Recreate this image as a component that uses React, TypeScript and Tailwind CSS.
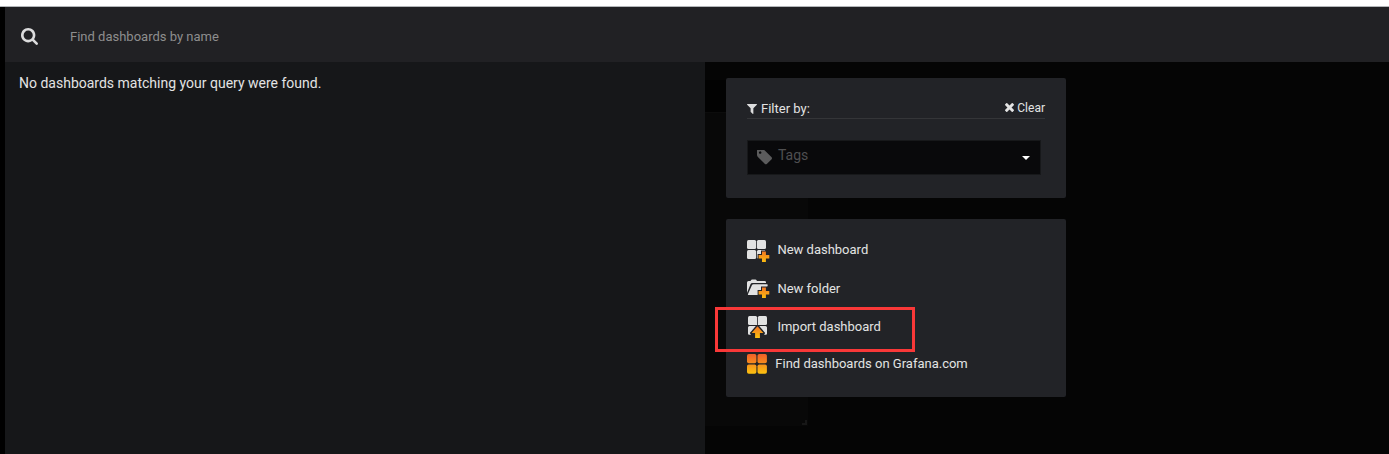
import type { ReactNode } from "react";

function Glyph({ d, viewBox, className }: { d: string; viewBox: string; className: string }) {
  return (
    <svg viewBox={viewBox} preserveAspectRatio="none" className={`shrink-0 ${className}`} fill="currentColor" aria-hidden="true">
      <path d={d} />
    </svg>
  );
}

const SEARCH =
  "M1216 832q0-185-131.5-316.5t-316.5-131.5-316.5 131.5-131.5 316.5 131.5 316.5 316.5 131.5 316.5-131.5 131.5-316.5zm512 832q0 52-38 90t-90 38q-54 0-90-38l-343-342q-179 124-399 124-143 0-273.5-55.5t-225-150-150-225-55.5-273.5 55.5-273.5 150-225 225-150 273.5-55.5 273.5 55.5 225 150 150 225 55.5 273.5q0 220-124 399l343 343q37 37 37 90z";
const FILTER =
  "M1595 295q17 41-14 70l-493 493v742q0 42-39 59-13 5-25 5-27 0-45-19l-256-256q-19-19-19-45v-486l-493-493q-31-29-14-70 17-39 59-39h1280q42 0 59 39z";
const CLOSE =
  "M1490 1322q0 40-28 68l-136 136q-28 28-68 28t-68-28l-294-294-294 294q-28 28-68 28t-68-28l-136-136q-28-28-28-68t28-68l294-294-294-294q-28-28-28-68t28-68l136-136q28-28 68-28t68 28l294 294 294-294q28-28 68-28t68 28l136 136q28 28 28 68t-28 68l-294 294 294 294q28 28 28 68z";
const TAG =
  "M576 448q0-53-37.5-90.5t-90.5-37.5-90.5 37.5-37.5 90.5 37.5 90.5 90.5 37.5 90.5-37.5 37.5-90.5zm1067 576q0 53-37 90l-491 492q-39 37-91 37-53 0-90-37l-715-716q-38-37-64.5-101t-26.5-117v-416q0-52 38-90t90-38h416q53 0 117 26.5t102 64.5l715 714q37 39 37 91z";

function Warm({ id, y1, y2 }: { id: string; y1: number; y2: number }) {
  return (
    <linearGradient id={id} gradientUnits="userSpaceOnUse" x1="0" x2="0" y1={y1} y2={y2}>
      <stop offset="0" stopColor="#f0592a" />
      <stop offset="1" stopColor="#fcc30f" />
    </linearGradient>
  );
}

const PLUS = "M15 11.4h3.9v3.5h3.4v3.7h-3.4v3.5H15v-3.5h-3.4v-3.7H15z";

function NewDashboardIcon() {
  return (
    <svg width="23" height="23" viewBox="0 0 23 23" className="shrink-0" aria-hidden="true">
      <defs><Warm id="plus-a" y1={7} y2={23} /></defs>
      <g fill="#e2e2e2">
        <rect x="0" y="0" width="9.1" height="9.1" rx="1.5" />
        <rect x="9.9" y="0" width="9.1" height="9.1" rx="1.5" />
        <rect x="0" y="9.9" width="9.1" height="9.1" rx="1.5" />
        <path d="M11.4 9.9h6.8l-.2.5h-4v3.5h-3.4v4.6q-.7-.3-.7-1.1v-6q0-1.5 1.5-1.5z" />
      </g>
      <path d={PLUS} fill="url(#plus-a)" />
    </svg>
  );
}

function NewFolderIcon() {
  return (
    <svg width="23" height="20" viewBox="0 3 23 20" className="shrink-0" aria-hidden="true">
      <defs><Warm id="plus-b" y1={7} y2={23} /></defs>
      <g fill="#e2e2e2">
        <path d="M0 17V6.5Q0 5 1.5 5h2l.6-1q.3-.5 1-.5h3.4q.6 0 .9.5l.5 1h7.6q1.5 0 1.5 1.3v.6H5.3q-1.2 0-1.7 1.1z" />
        <path d="M6.5 8.2h13.3q1.2 0 .9 1.1l-.4 1.1H14v3.5h-3.4v5.2H1.7q-1.1 0-.7-1.1l4-9q.4-.8 1.5-.8z" />
      </g>
      <path d={PLUS} fill="url(#plus-b)" />
    </svg>
  );
}

function ImportIcon() {
  return (
    <svg width="19" height="22" viewBox="0 0 19 22" className="shrink-0" aria-hidden="true">
      <defs><Warm id="arrow" y1={7} y2={22} /></defs>
      <g fill="#e2e2e2">
        <path d="M1.5 0h6.1q1.5 0 1.5 1.5v7.6H1.5Q0 9.1 0 7.6V1.5Q0 0 1.5 0z" />
        <path d="M11.4 0h6.1Q19 0 19 1.5v6.1q0 1.5-1.5 1.5H9.9V1.5Q9.9 0 11.4 0z" />
        <path d="M1.5 9.9h6.3L1.8 17l1.2 1.8H1.5Q0 19 0 17.5v-6.1q0-1.5 1.5-1.5z" />
        <path d="M17.5 9.9h-6.3l6 7.1-1.2 1.8h1.5q1.5.2 1.5-1.3v-6.1q0-1.5-1.5-1.5z" />
      </g>
      <path d="M9.5 10.2 15.4 17h-3.5v5H7.1v-5H3.6z" fill="url(#arrow)" />
    </svg>
  );
}

function GrafanaGridIcon() {
  return (
    <svg width="20" height="20" viewBox="0 0 20 20" className="shrink-0" aria-hidden="true">
      <defs><Warm id="grid" y1={-1} y2={20} /></defs>
      <g fill="url(#grid)">
        <rect x="0" y="0" width="9.4" height="9.3" rx="1.8" />
        <rect x="10.5" y="0" width="9.4" height="9.3" rx="1.8" />
        <rect x="0" y="10.4" width="9.4" height="9.3" rx="1.8" />
        <rect x="10.5" y="10.4" width="9.4" height="9.3" rx="1.8" />
      </g>
    </svg>
  );
}

function Action({ icon, label, className, labelClass = "" }: { icon: ReactNode; label: string; className: string; labelClass?: string }) {
  return (
    <a className={`flex items-start text-[13px] leading-5 text-[#e3e3e3] ${className}`}>
      {icon}
      <span className={`whitespace-nowrap ${labelClass}`}>{label}</span>
    </a>
  );
}

export default function App() {
  return (
    <div className="flex h-[454px] w-full flex-col overflow-hidden bg-black font-['Roboto',sans-serif] text-[#e3e3e3]">
      <div className="h-[7px] shrink-0 border-b border-[#b3b6b9] bg-white" />
      <div className="flex min-h-0 flex-1 flex-col pl-[5px]">
        <header className="flex h-[55px] shrink-0 items-center bg-[#212124] pl-4">
          <Glyph d={SEARCH} viewBox="64 128 1664 1664" className="mt-[3px] h-[17px] w-[17px] text-[#dcdcdd]" />
          <span className="ml-8 mt-1 text-[13px] leading-5 text-[#8e8e8e]">Find dashboards by name</span>
        </header>
        <div className="flex min-h-0 flex-1">
          <main className="w-[700px] shrink-0 bg-[#161719] pt-[11px] pl-[14px] text-[14px] leading-5">
            No dashboards matching your query were found.
          </main>
          <div className="relative flex-1 bg-[#050505] pt-4 pl-[21px]">
            <div className="absolute top-[18px] left-0 h-[346px] w-[103px] bg-[#080808]">
              <div className="h-[33px] border-b border-[#0c0c0c] bg-[#020202]" />
              <div className="absolute right-px bottom-px size-[5px] border-r-2 border-b-2 border-[#171717]" />
            </div>
            <aside className="relative w-[340px]">
              <section className="h-[120px] rounded-[2px] bg-[#222327] px-[21px] pt-[21px]">
                <div className="flex h-5 items-start border-b border-[#343538] text-[13px] leading-[18px]">
                  <Glyph d={FILTER} viewBox="192 256 1408 1408" className="mt-[5px] h-[10px] w-[10px] text-[#dcdcdd]" />
                  <span className="mt-px ml-[4px]">Filter by:</span>
                  <span className="ml-auto flex text-[12px]">
                    <Glyph d={CLOSE} viewBox="302 366 1188 1188" className="mt-1 mr-[3px] h-[9px] w-[9px]" />
                    Clear
                  </span>
                </div>
                <div className="mt-[21px] flex h-[35px] w-[294px] items-start border border-[#17181a] bg-[#09090b] pt-[9px] pl-[9px]">
                  <Glyph d={TAG} viewBox="128 192 1515 1515" className="h-[15px] w-[15px] text-[#5b5b5c]" />
                  <span className="-mt-[5px] ml-[6px] text-[14px] leading-5 text-[#4f4f51]">Tags</span>
                  <svg width="8" height="4" viewBox="0 0 8 4" className="mt-[6px] mr-[10px] ml-auto" fill="#fff" aria-hidden="true">
                    <path d="M0 0h8L4 4z" />
                  </svg>
                </div>
              </section>
              <section className="relative mt-[21px] h-[178px] rounded-[2px] bg-[#222327] pt-[21px] pl-[21px]">
                <Action icon={<NewDashboardIcon />} label="New dashboard" className="h-[39px] gap-[7px]" labelClass="ml-[0.4px]" />
                <Action icon={<NewFolderIcon />} label="New folder" className="h-[37px] gap-[7px]" labelClass="ml-[0.4px]" />
                <Action icon={<ImportIcon />} label="Import dashboard" className="ml-px h-[38px] gap-[10px]" labelClass="mt-px ml-[0.4px]" />
                <Action icon={<GrafanaGridIcon />} label="Find dashboards on Grafana.com" className="gap-[8px]" labelClass="ml-[0.3px]" />
                <div className="absolute top-[88px] -left-[11px] h-[45px] w-[200px] border-3 border-[#f93838]" />
              </section>
            </aside>
          </div>
        </div>
      </div>
    </div>
  );
}
